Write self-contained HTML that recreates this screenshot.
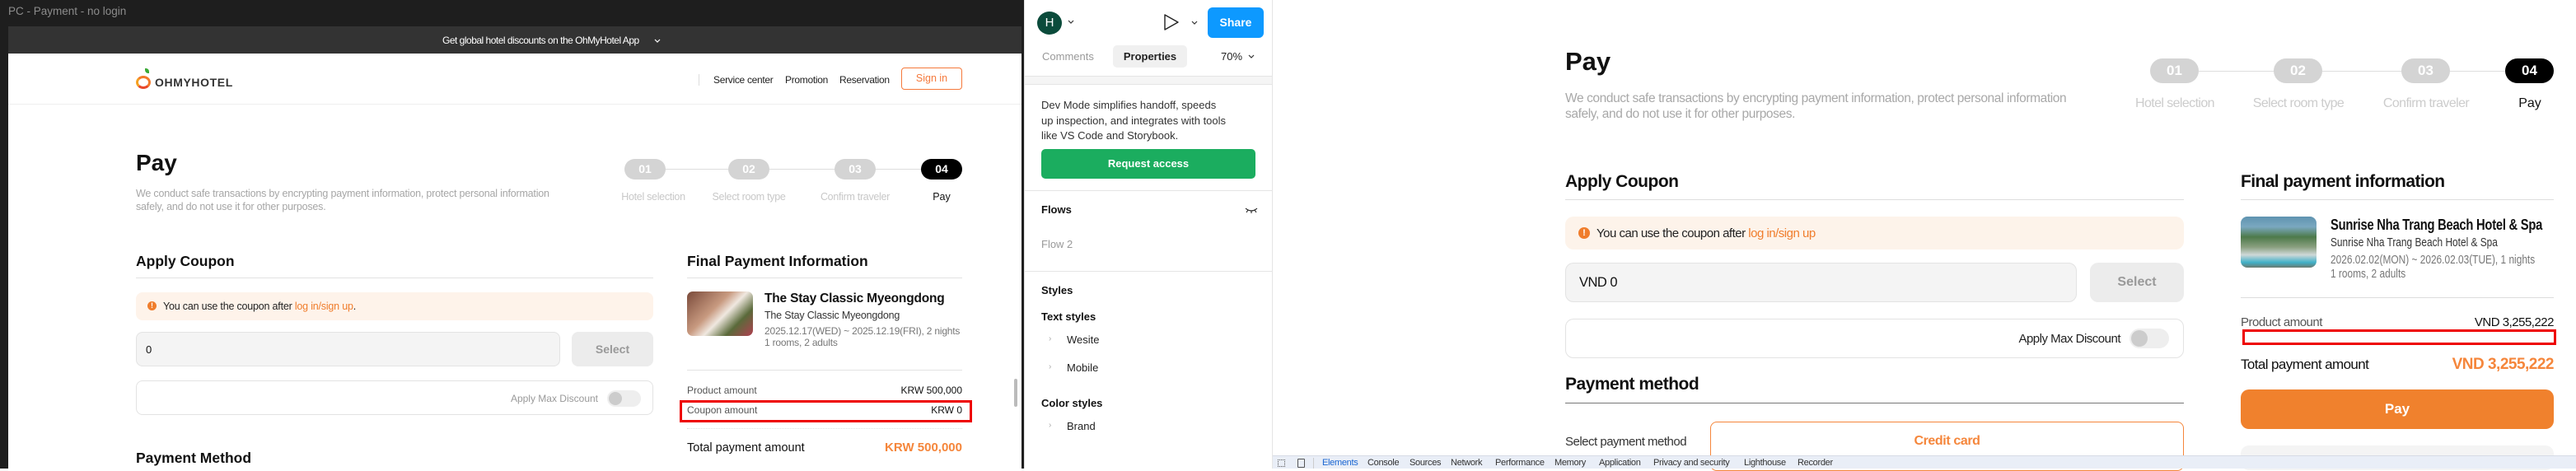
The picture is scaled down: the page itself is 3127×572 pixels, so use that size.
<!DOCTYPE html>
<html><head><meta charset="utf-8">
<style>
*{margin:0;padding:0;box-sizing:border-box}
body{width:3127px;height:569px;position:relative;overflow:hidden;background:#fff;font-family:"Liberation Sans",Arial,sans-serif}
.a{position:absolute}
.t{position:absolute;white-space:nowrap;line-height:1}
.pill{position:absolute;background:#d4d4d4;color:#fff;font-weight:bold;text-align:center;border-radius:20px}
.b{font-weight:bold}
.sx{transform:scaleX(.82);transform-origin:left center}
.sxr{transform:scaleX(.85);transform-origin:right center}
</style></head><body>

<!-- ===== Figma canvas ===== -->
<div class="a" style="left:0;top:0;width:1243px;height:569px;background:#1e1e1e"></div>
<div class="t" style="left:10px;top:7px;font-size:13.5px;color:#8c8c8c">PC - Payment - no login</div>
<div class="a" style="left:10px;top:32px;width:1230px;height:537px;background:#fff;overflow:hidden">
  <div class="a" style="left:0;top:0;width:1230px;height:33px;background:#333"></div>
  <div class="t" style="left:527px;top:11px;font-size:12px;color:#fff;letter-spacing:-0.5px">Get global hotel discounts on the OhMyHotel App</div>
  <svg class="a" style="left:783px;top:14px" width="10" height="8" viewBox="0 0 10 8"><path d="M2 2l3 3 3-3" stroke="#fff" stroke-width="1.2" fill="none"/></svg>
  <div class="a" style="left:0;top:94px;width:1230px;height:1px;background:#eee"></div>
  <!-- logo -->
  <div class="a" style="left:155px;top:60px;width:18px;height:16px;border-radius:50%;border:3.5px solid #f37a2a;border-left-color:#f5a021;border-bottom-color:#e9492c"></div>
  <div class="a" style="left:166px;top:51px;width:5px;height:6px;background:#39a935;border-radius:0 4px 0 4px"></div>
  <div class="t b" style="left:178px;top:61px;font-size:14px;color:#333;letter-spacing:0.6px">OHMYHOTEL</div>
  <div class="a" style="left:838px;top:58px;width:1px;height:14px;background:#ddd"></div>
  <div class="t" style="left:856px;top:59px;font-size:12px;color:#222;letter-spacing:-0.3px">Service center</div>
  <div class="t" style="left:943px;top:59px;font-size:12px;color:#222;letter-spacing:-0.3px">Promotion</div>
  <div class="t" style="left:1009px;top:59px;font-size:12px;color:#222;letter-spacing:-0.3px">Reservation</div>
  <div class="a" style="left:1084px;top:50px;width:74px;height:27px;border:1px solid #f5793b;border-radius:4px;color:#f5793b;font-size:12.5px;text-align:center;line-height:25px">Sign in</div>
  <div class="t b" style="left:155px;top:152px;font-size:28px;color:#111">Pay</div>
  <div class="t" style="left:155px;top:195px;font-size:12.5px;color:#a6a6a6;letter-spacing:-0.2px;line-height:16px">We conduct safe transactions by encrypting payment information, protect personal information<br>safely, and do not use it for other purposes.</div>
  <!-- steps -->
  <div class="a" style="left:798px;top:173px;width:310px;height:1px;background:#ddd"></div>
  <div class="pill" style="left:748px;top:161px;width:50px;height:25px;font-size:14px;line-height:25px">01</div>
  <div class="pill" style="left:874px;top:161px;width:50px;height:25px;font-size:14px;line-height:25px">02</div>
  <div class="pill" style="left:1003px;top:161px;width:50px;height:25px;font-size:14px;line-height:25px">03</div>
  <div class="pill" style="left:1108px;top:161px;width:50px;height:25px;font-size:14px;line-height:25px;background:#000">04</div>
  <div class="t" style="left:733px;top:201px;width:100px;text-align:center;font-size:12.5px;color:#c8c8c8;letter-spacing:-0.3px">Hotel selection</div>
  <div class="t" style="left:849px;top:201px;width:100px;text-align:center;font-size:12.5px;color:#c8c8c8;letter-spacing:-0.3px">Select room type</div>
  <div class="t" style="left:978px;top:201px;width:100px;text-align:center;font-size:12.5px;color:#c8c8c8;letter-spacing:-0.3px">Confirm traveler</div>
  <div class="t" style="left:1083px;top:201px;width:100px;text-align:center;font-size:12.5px;color:#111">Pay</div>
  <!-- coupon -->
  <div class="t b" style="left:155px;top:277px;font-size:17.5px;color:#111">Apply Coupon</div>
  <div class="a" style="left:155px;top:305px;width:628px;height:1px;background:#e2e2e2"></div>
  <div class="a" style="left:155px;top:323px;width:628px;height:34px;background:#fef3ea;border-radius:8px"></div>
  <div class="a" style="left:169px;top:334px;width:11px;height:11px;border-radius:50%;background:#f07d2c;color:#fff;font-size:9px;font-weight:bold;text-align:center;line-height:11px">!</div>
  <div class="t" style="left:188px;top:334px;font-size:12.5px;color:#222;letter-spacing:-0.2px">You can use the coupon after <span style="color:#f07d2c">log in/sign up</span>.</div>
  <div class="a" style="left:155px;top:371px;width:515px;height:42px;background:#f4f4f4;border:1px solid #e3e3e3;border-radius:8px"></div>
  <div class="t" style="left:167px;top:386px;font-size:13px;color:#111">0</div>
  <div class="a" style="left:684px;top:371px;width:99px;height:42px;background:#ececec;border-radius:8px;color:#999;font-weight:bold;font-size:14px;text-align:center;line-height:42px">Select</div>
  <div class="a" style="left:155px;top:430px;width:628px;height:42px;border:1px solid #e3e3e3;border-radius:8px"></div>
  <div class="t" style="left:566px;top:446px;width:150px;text-align:right;font-size:12px;color:#999">Apply Max Discount</div>
  <div class="a" style="left:727px;top:442px;width:41px;height:20px;background:#eee;border-radius:10px"></div>
  <div class="a" style="left:729px;top:444px;width:16px;height:16px;background:#ccc;border-radius:50%"></div>
  <div class="t b" style="left:155px;top:516px;font-size:17.5px;color:#111">Payment Method</div>
  <!-- final payment -->
  <div class="t b" style="left:824px;top:277px;font-size:17.5px;color:#111">Final Payment Information</div>
  <div class="a" style="left:824px;top:305px;width:334px;height:1px;background:#e2e2e2"></div>
  <div class="a" style="left:824px;top:322px;width:80px;height:54px;border-radius:7px;background:linear-gradient(135deg,#7a4a3a,#c89a80 40%,#f0e8e0 55%,#5a6a3a 75%,#b04050)"></div>
  <div class="t b" style="left:918px;top:323px;font-size:15.5px;color:#111;letter-spacing:-0.2px">The Stay Classic Myeongdong</div>
  <div class="t" style="left:918px;top:345px;font-size:12.5px;color:#333;letter-spacing:-0.2px">The Stay Classic Myeongdong</div>
  <div class="t" style="left:918px;top:364px;font-size:12px;color:#777;letter-spacing:-0.2px">2025.12.17(WED) ~ 2025.12.19(FRI), 2 nights</div>
  <div class="t" style="left:918px;top:378px;font-size:12px;color:#777;letter-spacing:-0.2px">1 rooms, 2 adults</div>
  <div class="a" style="left:824px;top:417px;width:334px;height:1px;background:#e2e2e2"></div>
  <div class="t" style="left:824px;top:436px;font-size:12px;color:#555">Product amount</div>
  <div class="t" style="left:1058px;top:436px;width:100px;text-align:right;font-size:12px;color:#111">KRW 500,000</div>
  <div class="a" style="left:815px;top:454px;width:355px;height:27px;border:3px solid #e00"></div>
  <div class="t" style="left:824px;top:460px;font-size:12px;color:#555">Coupon amount</div>
  <div class="t" style="left:1058px;top:460px;width:100px;text-align:right;font-size:12px;color:#111">KRW 0</div>
  <div class="a" style="left:824px;top:488px;width:334px;height:0;border-top:1px dotted #ddd"></div>
  <div class="t" style="left:824px;top:505px;font-size:14.5px;color:#111;font-weight:500">Total payment amount</div>
  <div class="t b" style="left:1008px;top:504px;width:150px;text-align:right;font-size:15px;color:#f5863b">KRW 500,000</div>
  <div class="a" style="left:1221px;top:428px;width:4px;height:34px;background:#bbb;border-radius:2px"></div>
</div>

<!-- ===== Figma panel ===== -->
<div class="a" style="left:1243px;top:0;width:302px;height:569px;background:#fff;border-left:1px solid #e5e5e5;border-right:1px solid #e5e5e5"></div>
<div class="a" style="left:1259px;top:14px;width:30px;height:28px;border-radius:50%;background:#0b4b3b;color:#fff;font-size:15px;text-align:center;line-height:28px">H</div>
<svg class="a" style="left:1296px;top:24px" width="8" height="6"><path d="M1 1l3 3 3-3" stroke="#333" stroke-width="1.2" fill="none"/></svg>
<svg class="a" style="left:1411px;top:16px" width="22" height="22"><path d="M3 2L19 11 3 20Z" stroke="#222" stroke-width="1.4" fill="none" stroke-linejoin="round"/></svg>
<svg class="a" style="left:1446px;top:25px" width="8" height="6"><path d="M1 1l3 3 3-3" stroke="#333" stroke-width="1.2" fill="none"/></svg>
<div class="a" style="left:1466px;top:9px;width:68px;height:37px;background:#0d99ff;border-radius:6px;color:#fff;font-weight:bold;font-size:14px;text-align:center;line-height:37px">Share</div>
<div class="t" style="left:1265px;top:62px;font-size:13px;color:#999">Comments</div>
<div class="a" style="left:1351px;top:55px;width:90px;height:27px;background:#f0f0f0;border-radius:5px;color:#222;font-weight:bold;font-size:13px;text-align:center;line-height:27px">Properties</div>
<div class="t" style="left:1482px;top:62px;font-size:13px;color:#222">70%</div>
<svg class="a" style="left:1515px;top:66px" width="8" height="6"><path d="M1 1l3 3 3-3" stroke="#333" stroke-width="1.2" fill="none"/></svg>
<div class="a" style="left:1244px;top:92px;width:300px;height:11px;background:#f5f5f5;border-top:1px solid #e5e5e5;border-bottom:1px solid #e5e5e5"></div>
<div class="t" style="left:1264px;top:119px;font-size:13px;color:#333;line-height:18.5px">Dev Mode simplifies handoff, speeds<br>up inspection, and integrates with tools<br>like VS Code and Storybook.</div>
<div class="a" style="left:1264px;top:181px;width:260px;height:36px;background:#1bad5f;border-radius:5px;color:#fff;font-weight:bold;font-size:13px;text-align:center;line-height:36px">Request access</div>
<div class="a" style="left:1244px;top:231px;width:300px;height:1px;background:#e5e5e5"></div>
<div class="t b" style="left:1264px;top:248px;font-size:13px;color:#111">Flows</div>
<svg class="a" style="left:1511px;top:250px" width="16" height="10"><path d="M1 3Q8 9 15 3M4 5L2 8M8 6v3M12 5l2 3" stroke="#222" stroke-width="1.1" fill="none"/></svg>
<div class="t" style="left:1264px;top:290px;font-size:13px;color:#999">Flow 2</div>
<div class="a" style="left:1244px;top:329px;width:300px;height:1px;background:#e5e5e5"></div>
<div class="t b" style="left:1264px;top:346px;font-size:13px;color:#111">Styles</div>
<div class="t b" style="left:1264px;top:378px;font-size:13px;color:#111">Text styles</div>
<div class="t" style="left:1273px;top:407px;font-size:10px;color:#aaa">›</div>
<div class="t" style="left:1295px;top:406px;font-size:13px;color:#222">Wesite</div>
<div class="t" style="left:1273px;top:441px;font-size:10px;color:#aaa">›</div>
<div class="t" style="left:1295px;top:440px;font-size:13px;color:#222">Mobile</div>
<div class="t b" style="left:1264px;top:483px;font-size:13px;color:#111">Color styles</div>
<div class="t" style="left:1273px;top:512px;font-size:10px;color:#aaa">›</div>
<div class="t" style="left:1295px;top:511px;font-size:13px;color:#222">Brand</div>

<!-- ===== Browser page ===== -->
<div class="t b" style="left:1900px;top:59px;font-size:31px;color:#111">Pay</div>
<div class="t" style="left:1900px;top:110px;font-size:15.5px;color:#a8a8a8;letter-spacing:-0.4px;line-height:19px">We conduct safe transactions by encrypting payment information, protect personal information<br>safely, and do not use it for other purposes.</div>
<div class="a" style="left:2669px;top:86px;width:372px;height:1px;background:#ddd"></div>
<div class="pill" style="left:2610px;top:71px;width:59px;height:30px;font-size:17px;line-height:30px">01</div>
<div class="pill" style="left:2760px;top:71px;width:59px;height:30px;font-size:17px;line-height:30px">02</div>
<div class="pill" style="left:2915px;top:71px;width:59px;height:30px;font-size:17px;line-height:30px">03</div>
<div class="pill" style="left:3041px;top:71px;width:59px;height:30px;font-size:17px;line-height:30px;background:#000">04</div>
<div class="t" style="left:2580px;top:118px;width:120px;text-align:center;font-size:16px;color:#ccc;letter-spacing:-0.6px">Hotel selection</div>
<div class="t" style="left:2730px;top:118px;width:120px;text-align:center;font-size:16px;color:#ccc;letter-spacing:-0.6px">Select room type</div>
<div class="t" style="left:2885px;top:118px;width:120px;text-align:center;font-size:16px;color:#ccc;letter-spacing:-0.6px">Confirm traveler</div>
<div class="t" style="left:3011px;top:118px;width:120px;text-align:center;font-size:16px;color:#111">Pay</div>

<div class="t b" style="left:1900px;top:210px;font-size:21px;color:#111;letter-spacing:-0.5px">Apply Coupon</div>
<div class="a" style="left:1900px;top:242px;width:751px;height:1px;background:#ddd"></div>
<div class="a" style="left:1900px;top:263px;width:751px;height:40px;background:#fdf3ea;border-radius:10px"></div>
<div class="a" style="left:1916px;top:276px;width:14px;height:14px;border-radius:50%;background:#f07d2c;color:#fff;font-size:11px;font-weight:bold;text-align:center;line-height:14px">!</div>
<div class="t" style="left:1938px;top:276px;font-size:15px;color:#222;letter-spacing:-0.5px">You can use the coupon after <span style="color:#f07d2c">log in/sign up</span></div>
<div class="a" style="left:1900px;top:319px;width:621px;height:48px;background:#f4f4f4;border:1px solid #e3e3e3;border-radius:10px"></div>
<div class="t" style="left:1917px;top:335px;font-size:16.5px;color:#111;letter-spacing:-0.5px">VND 0</div>
<div class="a" style="left:2537px;top:319px;width:114px;height:48px;background:#ececec;border-radius:10px;color:#999;font-weight:bold;font-size:16px;text-align:center;line-height:48px">Select</div>
<div class="a" style="left:1900px;top:387px;width:751px;height:48px;border:1px solid #e3e3e3;border-radius:10px"></div>
<div class="t" style="left:2414px;top:404px;width:160px;text-align:right;font-size:15px;color:#222;letter-spacing:-0.5px">Apply Max Discount</div>
<div class="a" style="left:2585px;top:399px;width:48px;height:24px;background:#eee;border-radius:12px"></div>
<div class="a" style="left:2587px;top:401px;width:20px;height:20px;background:#ccc;border-radius:50%"></div>
<div class="t b" style="left:1900px;top:456px;font-size:21px;color:#111;letter-spacing:-0.5px">Payment method</div>
<div class="a" style="left:1900px;top:489px;width:751px;height:1px;background:#777"></div>
<div class="t" style="left:1900px;top:529px;font-size:15px;color:#333;letter-spacing:-0.5px">Select payment method</div>
<div class="a" style="left:2076px;top:512px;width:575px;height:60px;border:1px solid #f5863b;border-radius:8px"></div>
<div class="t b" style="left:2076px;top:528px;width:575px;text-align:center;font-size:16px;color:#f5863b;letter-spacing:-0.4px">Credit card</div>

<div class="t b" style="left:2720px;top:210px;font-size:21px;color:#111;letter-spacing:-0.6px">Final payment information</div>
<div class="a" style="left:2720px;top:242px;width:380px;height:1px;background:#ddd"></div>
<div class="a" style="left:2720px;top:263px;width:92px;height:62px;border-radius:8px;background:linear-gradient(180deg,#5f93b0 0%,#7aa8c0 20%,#4d7a4a 40%,#8aa080 60%,#cfd8d8 75%,#3fb0c8 90%,#6b7a70)"></div>
<div class="t b sx" style="left:2829px;top:264px;font-size:18px;color:#111;letter-spacing:-0.3px">Sunrise Nha Trang Beach Hotel &amp; Spa</div>
<div class="t sx" style="left:2829px;top:288px;font-size:14.5px;color:#333">Sunrise Nha Trang Beach Hotel &amp; Spa</div>
<div class="t sx" style="left:2829px;top:309px;font-size:14.5px;color:#777">2026.02.02(MON) ~ 2026.02.03(TUE), 1 nights</div>
<div class="t sx" style="left:2829px;top:326px;font-size:14.5px;color:#777">1 rooms, 2 adults</div>
<div class="a" style="left:2720px;top:361px;width:380px;height:1px;background:#ddd"></div>
<div class="t" style="left:2720px;top:384px;font-size:15px;color:#555;letter-spacing:-0.5px">Product amount</div>
<div class="t" style="left:2950px;top:384px;width:150px;text-align:right;font-size:15px;color:#111;letter-spacing:-0.5px">VND 3,255,222</div>
<div class="a" style="left:2722px;top:400px;width:381px;height:19px;border:3px solid #e00"></div>
<div class="t" style="left:2720px;top:434px;font-size:17px;color:#111;letter-spacing:-0.6px">Total payment amount</div>
<div class="t b" style="left:2900px;top:433px;width:200px;text-align:right;font-size:19px;color:#f5863b;letter-spacing:-0.5px">VND 3,255,222</div>
<div class="a" style="left:2720px;top:473px;width:380px;height:48px;background:#f0812d;border-radius:10px;color:#fff;font-weight:bold;font-size:17px;text-align:center;line-height:48px">Pay</div>
<div class="a" style="left:2720px;top:541px;width:380px;height:30px;background:#f4f4f4;border-radius:10px"></div>

<!-- devtools bar -->
<div class="a" style="left:1545px;top:553px;width:1582px;height:16px;background:#e9eef7;border-top:1px solid #d6dbe5"></div>
<div class="a" style="left:1551px;top:558px;width:9px;height:9px;border:1px dotted #555"></div>
<div class="a" style="left:1575px;top:557px;width:9px;height:11px;border:1px solid #555;border-radius:1px"></div>
<div class="a" style="left:1594px;top:556px;width:1px;height:13px;background:#ccc"></div>
<div class="t" style="left:1605px;top:557px;font-size:11px;color:#1a66d2;letter-spacing:-0.3px">Elements</div>
<div class="t" style="left:1660px;top:557px;font-size:11px;color:#333;letter-spacing:-0.3px">Console</div>
<div class="t" style="left:1711px;top:557px;font-size:11px;color:#333;letter-spacing:-0.3px">Sources</div>
<div class="t" style="left:1761px;top:557px;font-size:11px;color:#333;letter-spacing:-0.3px">Network</div>
<div class="t" style="left:1815px;top:557px;font-size:11px;color:#333;letter-spacing:-0.3px">Performance</div>
<div class="t" style="left:1887px;top:557px;font-size:11px;color:#333;letter-spacing:-0.3px">Memory</div>
<div class="t" style="left:1941px;top:557px;font-size:11px;color:#333;letter-spacing:-0.3px">Application</div>
<div class="t" style="left:2007px;top:557px;font-size:11px;color:#333;letter-spacing:-0.3px">Privacy and security</div>
<div class="t" style="left:2117px;top:557px;font-size:11px;color:#333;letter-spacing:-0.3px">Lighthouse</div>
<div class="t" style="left:2182px;top:557px;font-size:11px;color:#333;letter-spacing:-0.3px">Recorder</div>
</body></html>
